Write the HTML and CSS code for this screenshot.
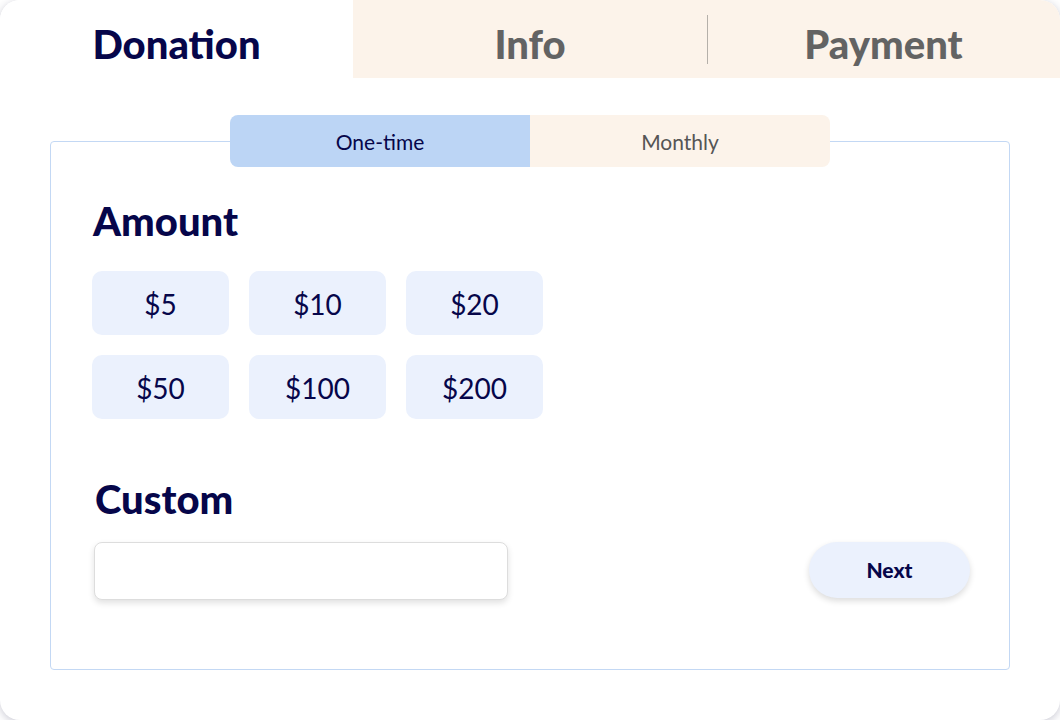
FILE: index.html
```html
<!DOCTYPE html>
<html lang="en">
<head>
<meta charset="utf-8">
<title>Donation</title>
<link rel="stylesheet" href="styles.css">
</head>
<body>
<div class="card">
  <div class="tabs">
    <div class="tab tab-active">Donation</div>
    <div class="tab">Info</div>
    <div class="tab tab-sep">Payment</div>
  </div>
  <div class="panel">
    <div class="toggle">
      <div class="toggle-opt toggle-on">One-time</div>
      <div class="toggle-opt">Monthly</div>
    </div>
    <h2 class="heading heading-amount">Amount</h2>
    <div class="amounts">
      <button class="amt">$5</button>
      <button class="amt">$10</button>
      <button class="amt">$20</button>
      <button class="amt">$50</button>
      <button class="amt">$100</button>
      <button class="amt">$200</button>
    </div>
    <h2 class="heading heading-custom">Custom</h2>
    <div class="custom-row">
      <input class="custom-input" type="text">
      <button class="next">Next</button>
    </div>
  </div>
</div>
</body>
</html>
```

FILE: styles.css
```css
* { box-sizing: border-box; }
html, body { margin: 0; padding: 0; background: #ffffff; }
body { font-family: "Lato", "Noto Sans", sans-serif; color: #06064a; }

.card {
  width: 1060px;
  height: 720px;
  background: #ffffff;
  border-radius: 20px;
  box-shadow: 0 2px 8px rgba(40, 40, 80, 0.25);
  overflow: hidden;
}

.tabs {
  display: grid;
  grid-template-columns: 353px 354px 353px;
  height: 78px;
}
.tab {
  background: #fcf3ea;
  color: #636363;
  font-weight: 900;
  font-size: 40px;
  display: flex;
  align-items: center;
  justify-content: center;
  padding-top: 10px;
  position: relative;
}
.tab-active { background: #ffffff; color: #06064a; }
.tab-sep::before {
  content: "";
  position: absolute;
  left: 0;
  top: 15px;
  height: 49px;
  width: 1px;
  background: #b5b0aa;
}

.panel {
  margin: 63px 50px 0 50px;
  height: 529px;
  border: 1px solid #c3d8f4;
  border-radius: 4px;
  padding: 0 42px;
}

.toggle {
  display: flex;
  width: 600px;
  height: 52px;
  margin: -27px auto 0 auto;
  border-radius: 8px;
  overflow: hidden;
}
.toggle-opt {
  flex: 1;
  display: flex;
  align-items: center;
  justify-content: center;
  font-size: 21px;
  padding-top: 1px;
  background: #fcf3ea;
  color: #555555;
}
.toggle-on { background: #bcd5f5; color: #06064a; }

.heading {
  margin: 0;
  font-weight: 900;
  font-size: 40px;
  line-height: 46px;
  color: #06064a;
}
.heading-amount { margin-top: 31px; }
.heading-custom { margin-top: 57px; margin-left: 2px; }

.amounts {
  display: grid;
  grid-template-columns: repeat(3, 137px);
  grid-auto-rows: 64px;
  gap: 20px;
  margin-top: 27px;
  margin-left: -1px;
}
.amt {
  border: none;
  border-radius: 10px;
  background: #ebf1fd;
  color: #06064a;
  font-family: inherit;
  font-size: 28px;
  padding: 2px 0 0 0;
}

.custom-row {
  display: flex;
  align-items: flex-start;
  justify-content: space-between;
  margin-top: 20px;
}
.custom-input {
  width: 414px;
  height: 58px;
  border: 1px solid #dddddd;
  border-radius: 8px;
  box-shadow: 0 3px 6px rgba(0, 0, 0, 0.12);
  margin-left: 1px;
  background: #ffffff;
}
.next {
  width: 161px;
  height: 56px;
  border: none;
  border-radius: 28px;
  background: #ebf1fd;
  color: #06064a;
  font-family: inherit;
  font-weight: 900;
  font-size: 21px;
  padding: 0 0 2px 0;
  box-shadow: 0 3px 6px rgba(0, 0, 0, 0.14);
  margin-right: -3px;
}
```
